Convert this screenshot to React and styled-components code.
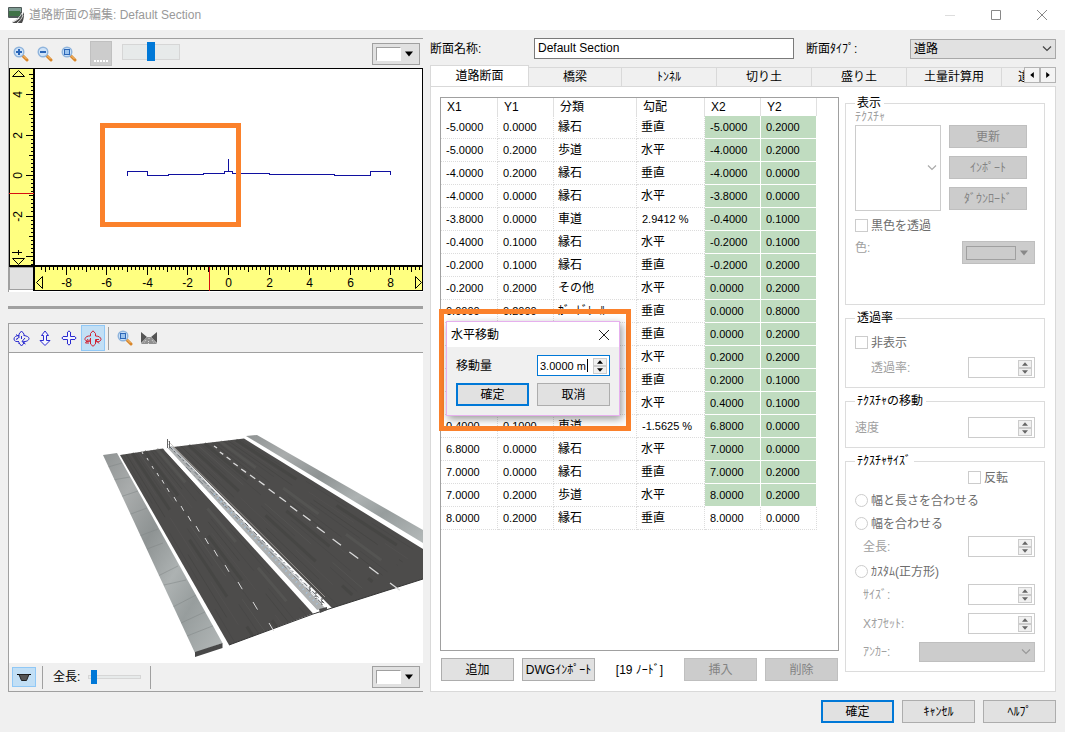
import { useState } from "react"
import styled, { createGlobalStyle, css } from "styled-components"

const GlobalStyle = createGlobalStyle`
  * {
    box-sizing: border-box;
  }

  body {
    margin: 0;
    background: #f0f0f0;
  }

  body, button, input, select {
    font-family: "Liberation Sans", "Noto Sans CJK JP", sans-serif;
    font-size: 12px;
    line-height: 14px;
    color: #000;
  }
`

const NODES = [
  ["-5.0000", "0.0000", "縁石", "垂直", "-5.0000", "0.2000"],
  ["-5.0000", "0.2000", "歩道", "水平", "-4.0000", "0.2000"],
  ["-4.0000", "0.2000", "縁石", "垂直", "-4.0000", "0.0000"],
  ["-4.0000", "0.0000", "縁石", "水平", "-3.8000", "0.0000"],
  ["-3.8000", "0.0000", "車道", "2.9412 %", "-0.4000", "0.1000"],
  ["-0.4000", "0.1000", "縁石", "水平", "-0.2000", "0.1000"],
  ["-0.2000", "0.1000", "縁石", "垂直", "-0.2000", "0.2000"],
  ["-0.2000", "0.2000", "その他", "水平", "0.0000", "0.2000"],
  ["0.0000", "0.2000", "ｶﾞｰﾄﾞﾚｰﾙ", "垂直", "0.0000", "0.8000"],
  ["0.0000", "0.8000", "ｶﾞｰﾄﾞﾚｰﾙ", "垂直", "0.0000", "0.2000"],
  ["0.0000", "0.2000", "その他", "水平", "0.2000", "0.2000"],
  ["0.2000", "0.2000", "縁石", "垂直", "0.2000", "0.1000"],
  ["0.2000", "0.1000", "縁石", "水平", "0.4000", "0.1000"],
  ["0.4000", "0.1000", "車道", "-1.5625 %", "6.8000", "0.0000"],
  ["6.8000", "0.0000", "縁石", "水平", "7.0000", "0.0000"],
  ["7.0000", "0.0000", "縁石", "垂直", "7.0000", "0.2000"],
  ["7.0000", "0.2000", "歩道", "水平", "8.0000", "0.2000"],
  ["8.0000", "0.2000", "縁石", "垂直", "8.0000", "0.0000"],
]

const COLUMNS = [
  ["X1", 57],
  ["Y1", 56],
  ["分類", 83],
  ["勾配", 68],
  ["X2", 56],
  ["Y2", 56],
]

const TABS = [
  ["道路断面", 99],
  ["橋梁", 93],
  ["ﾄﾝﾈﾙ", 95],
  ["切り土", 95],
  ["盛り土", 95],
  ["土量計算用", 95],
]

const isNumber = (text) => /\d/.test(text)

/* ---------- drawings ---------- */

const AppIcon = () => (
  <svg width="17" height="17" viewBox="0 0 17 17">
    <rect x="0" y="0" width="14" height="11" rx="1" fill="#4e5a58" />
    <rect x="1" y="1" width="12" height="4" fill="#7f9c93" />
    <rect x="1" y="4" width="11" height="5" fill="#3f7247" />
    <path d="M16 5C14 10 10 13 4 16H14C16 12 16 9 16 5Z" fill="#4b4b4b" />
    <path d="M14 6C12 10 9 13 4 15M15 8C14 11 12 14 9 16" stroke="#d8d8d8" strokeWidth="1" fill="none" />
  </svg>
)

const Magnifier = ({ mark }) => (
  <svg width="16" height="16" viewBox="0 0 16 16">
    <path d="M9.5 9.5L14 14" stroke="#d8862a" strokeWidth="3" strokeLinecap="round" />
    <path d="M10 9.5L13.5 13" stroke="#f8c680" strokeWidth="1" />
    <circle cx="6" cy="6" r="4.8" fill="#cfe3f8" stroke="#8fb4dc" strokeWidth="1.4" />
    {mark === "plus" && <path d="M3 6H9M6 3V9" stroke="#2b66b8" strokeWidth="2" />}
    {mark === "minus" && <path d="M3 6H9" stroke="#2b66b8" strokeWidth="2" />}
    {mark === "fit" && <rect x="3.5" y="3.5" width="5" height="5" fill="#9cc4ee" stroke="#2b66b8" />}
  </svg>
)

const OrbitIcon = ({ color = "#2a2ad0" }) => (
  <svg width="17" height="17" viewBox="0 0 17 17" fill="none" stroke={color}>
    <path d="M6 13L8.5 16L11 13M6 4L8.5 1L11 4V6M6 4V6M6 12V14M11 12V14" />
    <path d="M6 5.500C3 5.500 1 7 1 9C1 11 3 12 6 11.500M5 8.500C4 8.500 3.500 9 4 9.500" />
    <path d="M11 5.500C14 6 16 7 16 8.500C16 10.500 13 12 9.500 11.500" />
    <path d="M12 8L9 11.500L12.500 14M3 4.500L6.500 7L3 9.500M8.500 6V9" />
  </svg>
)

const RotateIcon = () => (
  <svg width="18" height="17" viewBox="0 0 18 17" fill="none" stroke="#d02030">
    <path d="M6.500 6V3.500L9 .8L11.500 3.500V6M6.500 12V14L9 16.300L11.500 14V12" />
    <path d="M6.500 6H4.500C2 6.500 .8 8 1 9.500C2 11.500 4 12 6.500 11" />
    <path d="M11.500 6C15 6 17 7.500 17 9.500C16.500 11.500 14 12.500 12 11.500" />
    <path d="M6.500 8V13M4 9L1.500 13H5M3 12L7 9M11.500 14V9.500H15M12 10L15 13.500" />
  </svg>
)

const UpDownIcon = () => (
  <svg width="14" height="17" viewBox="0 0 14 17">
    <path d="M5.500 5.500H3.500L7 1L10.500 5.500H8.500V10.500H12L7 15.500L2 10.500H5.500Z" fill="#f4f4ff" stroke="#2a2ad0" />
  </svg>
)

const PanIcon = () => (
  <svg width="16" height="16" viewBox="0 0 16 16">
    <path
      d="M8 .8L10 3H9.500V6.500H13V6L15.200 8L13 10V9.500H9.500V13H10L8 15.200L6 13H6.500V9.500H3V10L.8 8L3 6V6.500H6.500V3H6Z"
      fill="#f4f4ff"
      stroke="#2a2ad0"
    />
  </svg>
)

const RoadViewIcon = () => (
  <svg width="16" height="14" viewBox="0 0 16 14">
    <path d="M0 1L6 6L0 12ZM16 1L10 6L16 12Z" fill="#555" />
    <path d="M6 6H10L16 13H0Z" fill="#909090" />
    <path d="M8 7V9M7.500 10V13M5 9L3 12M11 9L13 12" stroke="#ddd" strokeDasharray="1 1" />
  </svg>
)

const SectionIcon = () => (
  <svg width="14" height="9" viewBox="0 0 14 9">
    <path d="M0 1.500H14" stroke="#000" />
    <path d="M2 1.500L4.500 7.500H9.500L12 1.500Z" fill="#555" stroke="#222" />
  </svg>
)

const Triangle = ({ dir = "down", size = 5, color = "#000" }) => {
  const turn = { down: 0, left: 90, up: 180, right: 270 }[dir]
  return (
    <svg width={size} height={size} viewBox="0 0 10 10">
      <path d="M0 2H10L5 8Z" fill={color} transform={`rotate(${turn} 5 5)`} />
    </svg>
  )
}

const Chevron = ({ color = "#444" }) => (
  <svg width="10" height="6" viewBox="0 0 10 6">
    <path d="M1 .5L5 4.500L9 .5" fill="none" stroke={color} strokeWidth="1.2" />
  </svg>
)

const range = (from, to) => Array.from({ length: to - from + 1 }, (_, i) => from + i)

// five ticks for every metre, a longer one on each metre, the longest on even metres
const tickLength = (n) => (n % 10 === 0 ? 8 : n % 5 === 0 ? 5 : 3)

const sectionX = (n) => Math.round(228 + (n * 20.3) / 5) + 0.5
const sectionY = (n) => Math.round(175 - (n * 20.25) / 5) + 0.5

const SectionChart = () => (
  <ChartSvg viewBox="9 68 414 224">
    <rect x="9" y="68" width="414" height="224" fill="#fff" />
    <rect x="9" y="68" width="26" height="199" fill="#ffff80" />
    <rect x="34" y="266" width="389" height="25" fill="#ffff80" />
    <rect x="9.5" y="267.5" width="24" height="22" fill="#e1e1e1" stroke="#a0a0a0" />
    <g stroke="#000" shapeRendering="crispEdges" fill="none">
      <path d="M9 68.500H423M422.500 68V291M9.500 68V266M34 290.500H423" />
      <path d="M34 68V291M9 266H423" strokeWidth="2" />
      {range(-22, 25).map((n) => (
        <path key={n} d={`M34 ${sectionY(n)}h${-tickLength(n)}`} />
      ))}
      {range(-46, 47).map((n) => (
        <path key={n} d={`M${sectionX(n)} 267v${tickLength(n)}`} />
      ))}
    </g>
    <g fill="#ffff80" stroke="#000">
      <path d="M12.500 76.500L18.500 70.500L24.500 76.500Z" />
      <path d="M12.500 258.500H24.500L18.500 264.500Z" />
      <path d="M36.500 282.500L42.500 276.500V288.500Z" />
      <path d="M415.500 276.500V288.500L421.500 282.500Z" />
    </g>
    <g fontSize="12" textAnchor="middle">
      {[-8, -6, -4, -2, 0, 2, 4, 6, 8].map((n) => (
        <text key={n} x={sectionX(n * 5)} y="287">{n}</text>
      ))}
      {[4, 2, 0, -2].map((n) => (
        <text key={n} transform={`translate(22 ${sectionY(n * 5)}) rotate(-90)`}>{n}</text>
      ))}
      <path d="M12 252.500H22M18.500 250V255" stroke="#000" />
    </g>
    <path d="M9 193.500H34M209.500 267V291" stroke="#d81010" shapeRendering="crispEdges" />
    <path
      d="M127.500 176V171.500H147.500V175.500H168V174.500H203V173.500H224.500V171.500H232.500V173.500H269V174.500H334V175.500H370.500V171.500H390.500V175M228.500 159V171"
      fill="none"
      stroke="#1010a0"
      shapeRendering="crispEdges"
    />
    <rect x="102.500" y="125.500" width="136" height="99" fill="none" stroke="#fb812b" strokeWidth="5" />
  </ChartSvg>
)

const LEFT_DASHES = [
  [142, 452], [147, 458], [152, 466], [157, 473], [162, 480], [167, 488], [174, 497], [181, 506],
  [188, 516], [196, 526], [205, 538], [214, 550], [225, 565], [238, 582], [253, 602], [269, 623],
]

const RIGHT_DASHES = [
  [214, 446], [220, 452], [227, 457], [234, 463], [242, 469], [251, 475], [260, 481], [270, 489],
  [281, 497], [292, 506], [305, 515], [319, 527], [335, 539], [352, 552], [372, 567], [393, 583],
]

const lerp = (a, b, t) => a + (b - a) * t

const Streaks = ({ from, to, count }) => (
  <g>
    {range(1, count - 1).map((i) => {
      const t = i / count
      return (
        <path
          key={i}
          d={`M${lerp(from[0], from[2], t)} ${lerp(from[1], from[3], t)}L${lerp(to[0], to[2], t)} ${lerp(to[1], to[3], t)}`}
          stroke={i % 3 ? "#403f3e" : "#5c5b59"}
          strokeOpacity={i % 2 ? 0.3 : 0.5}
          strokeWidth={i % 4 === 0 ? 3 : 1}
          strokeDasharray={`${40 + (i * 17) % 40} ${22 + (i * 11) % 30}`}
        />
      )
    })}
  </g>
)

const RoadScene = () => (
  <SceneSvg viewBox="9 353 414 310" preserveAspectRatio="xMinYMin slice">
    <defs>
      <linearGradient id="walk" x1="0" y1="0" x2="1" y2="1">
        <stop offset="0" stopColor="#8f9393" />
        <stop offset=".2" stopColor="#a9acac" />
        <stop offset=".4" stopColor="#8e9393" />
        <stop offset=".6" stopColor="#adb2b2" />
        <stop offset=".75" stopColor="#979d9d" />
        <stop offset="1" stopColor="#b4b9b9" />
      </linearGradient>
      <clipPath id="left-walk">
        <path d="M103 455L117 453L222.500 643L195 653Z" />
      </clipPath>
    </defs>
    <rect x="9" y="353" width="414" height="310" fill="#fff" />
    <path d="M103 455L117 453L222.500 643L195 653Z" fill="url(#walk)" />
    <path
      d="M108 467L122 463M113 480L130 477M120 497L138 491M128 515L147 508M137 537L158 529M147 549L163 543M154 578L178 566M164 585L186 580M171 608L198 594M181 623L207 611M187 636L215 625"
      stroke="#7f8585"
      strokeOpacity=".5"
      fill="none"
      clipPath="url(#left-walk)"
    />
    <path d="M195 652L222.500 643V648L195 657Z" fill="#484848" />
    <path d="M120 455L163 448.500L313 613.500L229 645Z" fill="#4d4c4b" />
    <path d="M173 447L244 438.500L423 549V579L332 608Z" fill="#4d4c4b" />
    <Streaks from={[120, 455, 163, 448]} to={[229, 645, 313, 614]} count={14} />
    <Streaks from={[173, 447, 244, 439]} to={[332, 608, 423, 549]} count={18} />
    <path d="M246 436L257 435L423 530V543Z" fill="url(#walk)" />
    <path d="M229 645L313 614L332 608L423 579" stroke="#353535" strokeWidth="1" fill="none" />
    <g stroke="#dcdcdc" fill="none">
      {LEFT_DASHES.map(([x, y], i) => (
        <path key={i} d={`M${x} ${y}l${1 + i * 0.25} ${2 + i * 0.4}`} />
      ))}
      {RIGHT_DASHES.map(([x, y], i) => (
        <path key={i} strokeWidth="1.3" d={`M${x - i * 0.2} ${y}l${3 + i * 0.45} ${2 + i * 0.35}`} />
      ))}
    </g>
    <path d="M166 449L172 446L325 608L317 610Z" fill="#aeb1b2" />
    <path d="M166 449L316 612" stroke="#fff" strokeWidth="4" />
    <path d="M319 609L327 607V610L320 613Z" fill="#4a4a4a" />
    <path d="M167 440L325 597" stroke="#b8b2ac" strokeOpacity=".7" fill="none" />
    <path d="M168 444L321 602" stroke="#c6cacf" strokeWidth="1" fill="none" />
    <path d="M169 446L325 604" stroke="#63686d" strokeWidth="1" strokeDasharray="5 2 2 3" fill="none" />
    <path d="M186 467L322 604" stroke="#7b8085" strokeDasharray="7 5 1 4" fill="none" />
    <path d="M214 494L318 605" stroke="#a9c4dc" strokeWidth="2" strokeDasharray="1 4" fill="none" />
    <path d="M167.500 439V448M169.500 441V448" stroke="#666" strokeWidth="1" />
    <path d="M322 598V605M316 592V599M310 586V592" stroke="#333" strokeDasharray="2 1" />
  </SceneSvg>
)

/* ---------- small parts ---------- */

const ColorPicker = ({ label, disabled }) => (
  <ColorButton type="button" aria-label={label} disabled={disabled}>
    <Swatch $disabled={disabled} />
    <Triangle size={8} color={disabled ? "#888" : "#000"} />
  </ColorButton>
)

const Spinner = ({ id, label, value, onChange, active, disabled }) => (
  <SpinBox $active={active}>
    <SpinInput id={id} aria-label={label} value={value} onChange={onChange} readOnly={!onChange} disabled={disabled} />
    {active && <Caret />}
    <SpinButtons>
      <SpinButton type="button" aria-label="増やす" disabled={disabled}>
        <Triangle dir="up" size={6} color={disabled ? "#666" : "#000"} />
      </SpinButton>
      <SpinButton type="button" aria-label="減らす" disabled={disabled}>
        <Triangle size={6} color={disabled ? "#666" : "#000"} />
      </SpinButton>
    </SpinButtons>
  </SpinBox>
)

const SpinRow = ({ id, label, top, indent }) => (
  <Row $top={top} $indent={indent}>
    <MutedLabel htmlFor={id}>{label}</MutedLabel>
    <Spinner id={id} value="" disabled />
  </Row>
)

const MoveDialog = () => {
  const [amount, setAmount] = useState("3.0000 m")

  return (
    <Highlight>
      <Dialog role="dialog" aria-label="水平移動">
        <DialogTitle>
          <span>水平移動</span>
          <IconButton type="button" aria-label="閉じる">
            <svg width="12" height="12" viewBox="0 0 12 12">
              <path d="M1 1L11 11M11 1L1 11" stroke="#222" />
            </svg>
          </IconButton>
        </DialogTitle>
        <DialogBody>
          <label htmlFor="move-amount">移動量</label>
          <Spinner id="move-amount" value={amount} onChange={(e) => setAmount(e.target.value)} active />
          <Button type="button" $primary>確定</Button>
          <Button type="button">取消</Button>
        </DialogBody>
      </Dialog>
    </Highlight>
  )
}

const NodeTable = () => (
  <Table>
    <colgroup>
      {COLUMNS.map(([name, width]) => (
        <Col key={name} $width={width} />
      ))}
    </colgroup>
    <thead>
      <tr>
        {COLUMNS.map(([name]) => (
          <Th key={name}>{name}</Th>
        ))}
      </tr>
    </thead>
    <tbody>
      {NODES.map((row, r) => (
        <tr key={r}>
          {row.map((text, c) => (
            <Td key={c} $number={isNumber(text)} $linked={c > 3 && r < NODES.length - 1}>
              {text}
            </Td>
          ))}
        </tr>
      ))}
    </tbody>
  </Table>
)

const DisplaySettings = () => (
  <Settings>
    <Group>
      <Legend>表示</Legend>
      <TextureLabel htmlFor="texture">ﾃｸｽﾁｬ</TextureLabel>
      <TextureRow>
        <TextureBox>
          <TextureSelect id="texture" disabled />
          <Chevron color="#aaa" />
        </TextureBox>
        <ButtonColumn>
          <Button type="button" disabled>更新</Button>
          <Button type="button" disabled>ｲﾝﾎﾟｰﾄ</Button>
          <Button type="button" disabled>ﾀﾞｳﾝﾛｰﾄﾞ</Button>
        </ButtonColumn>
      </TextureRow>
      <Choice $top={8}>
        <CheckBox type="checkbox" disabled />
        黒色を透過
      </Choice>
      <ColorRow>
        <MutedLabel as="span">色:</MutedLabel>
        <ColorPicker label="透過色" disabled />
      </ColorRow>
    </Group>

    <Group>
      <Legend>透過率</Legend>
      <Choice $top={11}>
        <CheckBox type="checkbox" disabled />
        非表示
      </Choice>
      <SpinRow id="alpha" label="透過率:" top={8} indent={16} />
    </Group>

    <Group>
      <Legend>ﾃｸｽﾁｬの移動</Legend>
      <SpinRow id="speed" label="速度" top={9} indent={0} />
    </Group>

    <Group>
      <Legend>ﾃｸｽﾁｬｻｲｽﾞ</Legend>
      <FlipChoice $top={3}>
        <CheckBox type="checkbox" disabled />
        反転
      </FlipChoice>
      <Choice $top={10}>
        <Radio type="radio" name="fit" disabled />
        幅と長さを合わせる
      </Choice>
      <Choice $top={10}>
        <Radio type="radio" name="fit" disabled />
        幅を合わせる
      </Choice>
      <SpinRow id="length" label="全長:" top={6} indent={8} />
      <Choice $top={8}>
        <Radio type="radio" name="fit" disabled />
        ｶｽﾀﾑ(正方形)
      </Choice>
      <SpinRow id="size" label="ｻｲｽﾞ:" top={6} indent={8} />
      <SpinRow id="x-offset" label="Xｵﾌｾｯﾄ:" top={8} indent={8} />
      <Row $top={8} $indent={8}>
        <MutedLabel htmlFor="anchor">ｱﾝｶｰ:</MutedLabel>
        <AnchorBox>
          <Select id="anchor" disabled />
          <Chevron color="#999" />
        </AnchorBox>
      </Row>
    </Group>
  </Settings>
)

const App = () => {
  const [name, setName] = useState("Default Section")

  return (
    <Window>
      <GlobalStyle />
      <TitleBar>
        <AppIcon />
        <Title>道路断面の編集: Default Section</Title>
        <WindowButtons>
          <IconButton type="button" aria-label="最小化">
            <svg width="12" height="12" viewBox="0 0 12 12"><path d="M1 6.500H11" stroke="#ddd" /></svg>
          </IconButton>
          <IconButton type="button" aria-label="最大化">
            <svg width="12" height="12" viewBox="0 0 12 12"><path d="M1.500 1.500H10.500V10.500H1.500Z" fill="none" stroke="#888" /></svg>
          </IconButton>
          <IconButton type="button" aria-label="閉じる">
            <svg width="12" height="12" viewBox="0 0 12 12"><path d="M1 1L11 11M11 1L1 11" stroke="#888" /></svg>
          </IconButton>
        </WindowButtons>
      </TitleBar>

      <Content>
        <LeftSide>
          <Pane>
            <Toolbar>
              <ToolButton type="button" aria-label="拡大"><Magnifier mark="plus" /></ToolButton>
              <ToolButton type="button" aria-label="縮小"><Magnifier mark="minus" /></ToolButton>
              <ToolButton type="button" aria-label="全体表示"><Magnifier mark="fit" /></ToolButton>
              <GridButton type="button" aria-label="グリッド">
                <svg width="15" height="2" viewBox="0 0 15 2">
                  <path d="M0 1H15" stroke="#fff" strokeWidth="2" strokeDasharray="2 1" />
                </svg>
              </GridButton>
              <WideSlider type="range" aria-label="グリッド間隔" defaultValue="50" />
              <Spacer />
              <ColorPicker label="背景色" />
            </Toolbar>
            <SectionChart />
          </Pane>

          <Splitter />

          <Pane $grow>
            <Toolbar $line>
              <ToolButton type="button" aria-label="回転"><OrbitIcon /></ToolButton>
              <ToolButton type="button" aria-label="前後移動"><UpDownIcon /></ToolButton>
              <ToolButton type="button" aria-label="平行移動"><PanIcon /></ToolButton>
              <ToolButton type="button" aria-label="自由回転" $on><RotateIcon /></ToolButton>
              <Separator />
              <ToolButton type="button" aria-label="全体表示"><Magnifier mark="fit" /></ToolButton>
              <ToolButton type="button" aria-label="道路表示"><RoadViewIcon /></ToolButton>
            </Toolbar>
            <SceneBox>
              <RoadScene />
            </SceneBox>
            <BottomBar>
              <ToolButton type="button" aria-label="断面" $on $short><SectionIcon /></ToolButton>
              <Separator />
              <LengthLabel htmlFor="total-length">全長:</LengthLabel>
              <ThinSlider id="total-length" type="range" defaultValue="4" />
              <Separator />
              <Spacer />
              <ColorPicker label="背景色" />
            </BottomBar>
          </Pane>
        </LeftSide>

        <RightSide>
          <NameRow>
            <label htmlFor="section-name">断面名称:</label>
            <NameInput id="section-name" value={name} onChange={(e) => setName(e.target.value)} />
            <label htmlFor="section-type">断面ﾀｲﾌﾟ:</label>
            <SelectBox>
              <Select id="section-type" defaultValue="道路">
                <option>道路</option>
              </Select>
              <Chevron />
            </SelectBox>
          </NameRow>

          <TabBar>
            <TabList role="tablist">
              {TABS.map(([label, width], i) => (
                <Tab key={label} type="button" role="tab" aria-selected={i === 0} $width={width} $active={i === 0}>
                  {label}
                </Tab>
              ))}
              <CutTab type="button" role="tab">道路</CutTab>
            </TabList>
            <TabScroll type="button" aria-label="前のタブ"><Triangle dir="left" size={6} /></TabScroll>
            <TabScroll type="button" aria-label="次のタブ"><Triangle dir="right" size={6} /></TabScroll>
          </TabBar>

          <TabPage>
            <NodeColumn>
              <TableFrame>
                <NodeTable />
                <MoveDialog />
              </TableFrame>
              <NodeActions>
                <Button type="button">追加</Button>
                <Button type="button">DWGｲﾝﾎﾟｰﾄ</Button>
                <NodeCount>[19 ﾉｰﾄﾞ]</NodeCount>
                <Button type="button" disabled>挿入</Button>
                <Button type="button" disabled>削除</Button>
              </NodeActions>
            </NodeColumn>
            <DisplaySettings />
          </TabPage>
        </RightSide>
      </Content>

      <Footer>
        <Button type="button" $primary>確定</Button>
        <Button type="button">ｷｬﾝｾﾙ</Button>
        <Button type="button">ﾍﾙﾌﾟ</Button>
      </Footer>
    </Window>
  )
}

/* ---------- styles ---------- */

const Window = styled.div`
  min-height: 100vh;
  display: flex;
  flex-direction: column;
  background: #f0f0f0;
`

const TitleBar = styled.header`
  height: 30px;
  padding-left: 8px;
  display: flex;
  align-items: center;
  background: #fff;
`

const Title = styled.h1`
  flex: 1;
  margin: 0 0 0 4px;
  font: 400 12px/16px "Liberation Sans", "Noto Sans CJK JP", sans-serif;
  color: #999;
`

const WindowButtons = styled.div`
  display: flex;
  gap: 34px;
  padding-right: 17px;
`

const IconButton = styled.button`
  display: flex;
  padding: 0;
  border: 0;
  background: none;
`

const Content = styled.main`
  flex: 1;
  display: grid;
  grid-template-columns: minmax(0, 415fr) minmax(0, 626fr);
  gap: 7px;
  padding: 8px 9px 0 8px;
`

const LeftSide = styled.div`
  display: flex;
  flex-direction: column;
`

const Pane = styled.section`
  display: flex;
  flex-direction: column;
  border-top: 1px solid #a0a0a0;
  border-left: 1px solid #a0a0a0;
  ${({ $grow }) => $grow && css`
    flex: 1;
    border-bottom: 1px solid #a0a0a0;
  `}
`

const Toolbar = styled.div`
  display: flex;
  align-items: center;
  height: 29px;
  padding-right: 3px;
  border-bottom: ${({ $line }) => ($line ? "1px solid #a0a0a0" : "0")};
`

const ToolButton = styled.button`
  display: flex;
  align-items: center;
  justify-content: center;
  width: 24px;
  height: ${({ $short }) => ($short ? 20 : 26)}px;
  margin-right: ${({ $short }) => ($short ? 3 : 0)}px;
  padding: 0;
  border: 1px solid ${({ $on }) => ($on ? "#90c8f6" : "transparent")};
  background: ${({ $on }) => ($on ? "#c2dff5" : "none")};
`

const GridButton = styled.button`
  display: flex;
  align-items: flex-end;
  justify-content: center;
  width: 22px;
  height: 25px;
  margin: 0 10px 0 9px;
  padding: 0 0 3px;
  border: 1px solid #c0c0c0;
  background: #ccc;
`

const Slider = styled.input`
  appearance: none;
  margin: 0;
  background: none;

  &::-webkit-slider-thumb {
    appearance: none;
    background: #0078d7;
  }
`

const WideSlider = styled(Slider)`
  width: 58px;
  height: 20px;
  margin-bottom: 4px;

  &::-webkit-slider-runnable-track {
    height: 16px;
    border: 1px solid #d6d6d6;
    background: #e7eaea;
  }

  &::-webkit-slider-thumb {
    width: 8px;
    height: 19px;
    margin-top: -3px;
  }
`

const ThinSlider = styled(Slider)`
  width: 53px;
  height: 16px;
  margin-right: 6px;

  &::-webkit-slider-runnable-track {
    height: 4px;
    border: 1px solid #d6d6d6;
    background: #e7eaea;
  }

  &::-webkit-slider-thumb {
    width: 6px;
    height: 14px;
    margin-top: -6px;
  }
`

const Spacer = styled.div`
  flex: 1;
`

const Separator = styled.div`
  width: 1px;
  height: 23px;
  margin: 0 4px 0 3px;
  background: #a0a0a0;
`

const ColorButton = styled.button`
  display: flex;
  align-items: center;
  gap: 4px;
  height: 22px;
  padding: 0 6px 0 3px;
  border: 1px solid #a0a0a0;
  background: #e1e1e1;

  &:disabled {
    width: 73px;
    height: 23px;
    border-color: #bfbfbf;
    background: #ccc;
  }
`

const Swatch = styled.span`
  flex: 1;
  min-width: 25px;
  height: 14px;
  border: 1px solid;
  border-color: ${({ $disabled }) => ($disabled ? "#a0a0a0" : "#a0a0a0 #fff #fff #a0a0a0")};
  background: ${({ $disabled }) => ($disabled ? "#ccc" : "#fff")};
`

const ChartSvg = styled.svg`
  display: block;
  width: 100%;
  height: auto;
`

const Splitter = styled.hr`
  width: 100%;
  height: 3px;
  margin: 14px 0;
  border: 0;
  background: #a0a0a0;
`

const SceneBox = styled.div`
  flex: 1;
  min-height: 310px;
  background: #fff;
`

const SceneSvg = styled.svg`
  display: block;
  width: 100%;
  height: 100%;
`

const BottomBar = styled.div`
  display: flex;
  align-items: center;
  height: 28px;
  padding: 0 3px;
`

const LengthLabel = styled.label`
  margin: 0 8px 0 6px;
`

const RightSide = styled.div`
  display: flex;
  flex-direction: column;
`

const NameRow = styled.div`
  display: flex;
  align-items: center;
  height: 21px;

  label {
    flex: 0 0 auto;
    width: 104px;
  }
`

const NameInput = styled.input`
  flex: 1;
  min-width: 0;
  height: 21px;
  margin-right: 12px;
  padding: 0 3px 2px;
  border: 1px solid #7a7a7a;
  background: #fff;
  outline: 0;
`

const SelectBox = styled.div`
  display: grid;
  flex: 0 0 146px;
  align-items: center;

  > * {
    grid-area: 1 / 1;
  }

  > svg {
    justify-self: end;
    margin-right: 4px;
    pointer-events: none;
  }
`

const Select = styled.select`
  appearance: none;
  width: 100%;
  height: 20px;
  padding: 0 3px;
  border: 1px solid #a8a8a8;
  border-radius: 0;
  background: #e1e1e1;

  &:disabled {
    border-color: #bfbfbf;
    background: #ccc;
    opacity: 1;
  }
`

const AnchorBox = styled(SelectBox)`
  flex-basis: 116px;
`

const TabBar = styled.div`
  display: flex;
  align-items: flex-start;
  margin-top: 6px;
`

const TabList = styled.div`
  flex: 1;
  min-width: 0;
  display: flex;
  align-items: flex-end;
  overflow: hidden;
`

const Tab = styled.button`
  flex: 0 0 ${({ $width }) => $width}px;
  height: ${({ $active }) => ($active ? 21 : 19)}px;
  padding: 0;
  border: 1px solid #d9d9d9;
  border-bottom: 0;
  border-left-width: ${({ $active }) => ($active ? 1 : 0)}px;
  background: ${({ $active }) => ($active ? "#fff" : "#f0f0f0")};
`

const CutTab = styled(Tab)`
  flex: 0 0 60px;
  padding-left: 16px;
  text-align: left;
`

const TabScroll = styled.button`
  display: flex;
  align-items: center;
  justify-content: center;
  width: 16px;
  height: 16px;
  margin-top: 2px;
  padding: 0;
  border: 1px solid #b4b4b4;
  background: #f4f4f4;
`

const TabPage = styled.div`
  flex: 1;
  display: grid;
  grid-template-columns: minmax(0, 1fr) 200px;
  gap: 6px;
  padding: 10px 10px 10px 9px;
  border: 1px solid #d9d9d9;
  background: #fff;
`

const NodeColumn = styled.div`
  display: flex;
  flex-direction: column;
  gap: 7px;
`

// the dialog floats over the rows of this frame
const TableFrame = styled.div`
  position: relative;
  flex: 1;
  border: 1px solid #a0a0a0;
`

const Table = styled.table`
  width: 376px;
  table-layout: fixed;
  border-collapse: separate;
  border-spacing: 0;
`

const Col = styled.col`
  width: ${({ $width }) => $width}px;
`

const Th = styled.th`
  height: 18px;
  padding: 0 0 0 6px;
  border-right: 1px solid #e0e0e0;
  font-weight: 400;
  text-align: left;
`

const Td = styled.td`
  height: 23px;
  padding: 0 0 0 4px;
  border: 0 dotted #dcdcdc;
  border-width: 0 1px 1px 0;
  white-space: nowrap;
  ${({ $number }) => $number && css`
    padding-left: 5px;
    font-size: 11px;
  `}
  ${({ $linked }) => $linked && css`
    border-color: #fff;
    border-style: solid;
    background: #c0dcc0;
  `}
`

const NodeActions = styled.div`
  display: grid;
  grid-template-columns: 73px 73px 1fr 73px 73px;
  gap: 8px;
  align-items: center;
  padding: 0 1px;
`

const NodeCount = styled.span`
  text-align: center;
`

const Button = styled.button`
  height: 23px;
  padding: 0;
  border: ${({ $primary }) => ($primary ? "2px solid #0078d7" : "1px solid #adadad")};
  background: #e1e1e1;
  white-space: nowrap;

  &:disabled {
    border-color: #bfbfbf;
    background: #ccc;
    color: #838383;
  }
`

const Settings = styled.div`
  display: flex;
  flex-direction: column;
  gap: 7px;
`

const Group = styled.fieldset`
  display: flex;
  flex-direction: column;
  min-width: 0;
  margin: 0;
  padding: 0 9px 9px;
  border: 1px solid #dcdcdc;

  &:first-child {
    padding-bottom: 40px;
  }
`

const Legend = styled.legend`
  padding: 0 3px 0 2px;
  line-height: 13px;
`

const MutedLabel = styled.label`
  color: #a0a0a0;
`

const TextureLabel = styled(MutedLabel)`
  height: 15px;
`

const TextureRow = styled.div`
  display: flex;
  gap: 8px;
`

const TextureBox = styled.div`
  display: grid;
  flex: 0 0 86px;
  align-items: center;

  > * {
    grid-area: 1 / 1;
  }

  > svg {
    justify-self: end;
    margin-right: 4px;
  }
`

const TextureSelect = styled.select`
  appearance: none;
  width: 100%;
  height: 86px;
  border: 1px solid #ccc;
  border-radius: 0;
  background: #fff;
  opacity: 1;
`

const ButtonColumn = styled.div`
  display: flex;
  flex: 0 0 78px;
  flex-direction: column;
  gap: 8px;
`

const Choice = styled.label`
  display: flex;
  align-items: center;
  gap: 3px;
  height: 13px;
  margin-top: ${({ $top }) => $top}px;
  color: #6d6d6d;
`

const FlipChoice = styled(Choice)`
  width: 67px;
  align-self: flex-end;
`

const CheckBox = styled.input`
  appearance: none;
  width: 13px;
  height: 13px;
  margin: 0;
  border: 1px solid #ccc;
  background: #fff;
`

const Radio = styled(CheckBox)`
  border-radius: 50%;
`

const ColorRow = styled.div`
  display: flex;
  align-items: flex-start;
  justify-content: space-between;
  margin-top: 9px;
`

const Row = styled.div`
  display: flex;
  align-items: center;
  justify-content: space-between;
  margin-top: ${({ $top }) => $top}px;
  padding-left: ${({ $indent }) => $indent}px;
`

const SpinBox = styled.div`
  display: flex;
  align-items: center;
  flex: 0 0 auto;
  width: ${({ $active }) => ($active ? 73 : 67)}px;
  height: 21px;
  padding-right: 2px;
  border: 1px solid ${({ $active }) => ($active ? "#0078d7" : "#ccc")};
  background: #fff;
`

const SpinInput = styled.input`
  flex: 1;
  min-width: 0;
  padding: 0 0 0 2px;
  border: 0;
  outline: 0;
  background: none;
  font-size: 11px;
`

const Caret = styled.span`
  width: 1px;
  height: 13px;
  margin-right: 5px;
  background: #000;
`

const SpinButtons = styled.div`
  display: flex;
  flex-direction: column;
  width: 14px;
`

const SpinButton = styled.button`
  display: flex;
  align-items: center;
  justify-content: center;
  height: 8px;
  padding: 0;
  border: 1px solid #ccc;
  background: #f0f0f0;
`

const Highlight = styled.div`
  position: absolute;
  top: 211px;
  left: -2px;
  width: 192px;
  height: 122px;
  padding: 7px 6px 10px 2px;
  border: 5px solid #fb812b;
`

const Dialog = styled.div`
  height: 95px;
  border: 1px solid #e6b0ee;
  background: #f0f0f0;
  box-shadow: 2px 3px 8px rgba(0, 0, 0, 0.4);
`

const DialogTitle = styled.div`
  display: flex;
  align-items: center;
  justify-content: space-between;
  height: 25px;
  padding: 0 9px 0 4px;
  background: #fff;
`

const DialogBody = styled.div`
  display: grid;
  grid-template-columns: 1fr 1fr;
  gap: 7px 8px;
  align-items: center;
  padding: 8px 9px;
`

const Footer = styled.footer`
  display: flex;
  justify-content: flex-end;
  gap: 8px;
  padding: 8px 9px 9px;

  ${Button} {
    width: 73px;
  }
`

export default App
